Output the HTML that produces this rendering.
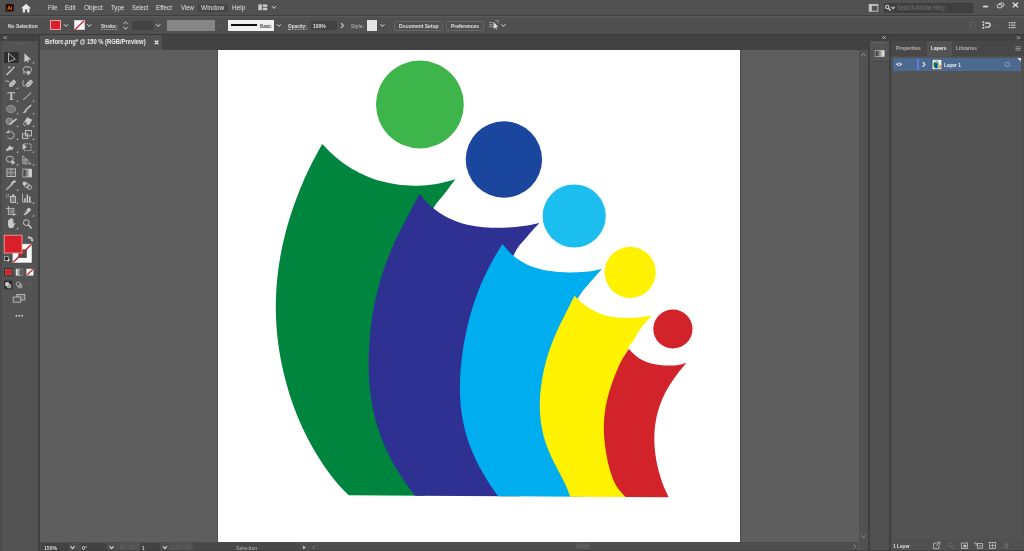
<!DOCTYPE html><html><head><meta charset="utf-8"><title>Adobe Illustrator</title><style>
html,body{margin:0;padding:0;}
body{width:1024px;height:551px;overflow:hidden;background:#5e5e5e;font-family:"Liberation Sans",sans-serif;position:relative;}
div{position:absolute;box-sizing:border-box;}
.tx{position:absolute;white-space:nowrap;line-height:1;transform-origin:0 50%;display:inline-block;}
svg{position:absolute;left:0;top:0;overflow:visible;}
#ui{left:0;top:0;width:1024px;height:551px;will-change:transform;transform:translateZ(0);}
</style></head><body>
<div id="canvas" style="left:40px;top:50px;width:818.5px;height:491.5px;background:#5e5e5e"></div>
<div id="artboard" style="left:218px;top:50px;width:521.5px;height:491.5px;background:#fff;box-shadow:0 0 0 0.6px rgba(40,40,40,.55)"></div>
<svg id="art" width="1024" height="551" viewBox="0 0 1024 551"><g id="artg"><path fill="#00853f" d="M322.25 144.00 C323.64 145.42 327.81 149.89 330.58 152.52 C333.36 155.14 336.14 157.52 338.92 159.74 C341.70 161.95 344.48 163.96 347.25 165.81 C350.03 167.67 352.81 169.34 355.59 170.87 C358.37 172.41 361.14 173.78 363.92 175.04 C366.70 176.29 369.48 177.40 372.26 178.40 C375.03 179.41 377.81 180.28 380.59 181.06 C383.37 181.83 386.15 182.49 388.93 183.06 C391.70 183.63 394.48 184.10 397.26 184.48 C400.04 184.86 402.82 185.15 405.59 185.34 C408.37 185.54 411.15 185.65 413.93 185.68 C416.71 185.70 419.48 185.64 422.26 185.49 C425.04 185.34 427.82 185.10 430.60 184.77 C433.38 184.44 436.15 184.02 438.93 183.49 C441.71 182.97 444.49 182.35 447.27 181.62 C450.04 180.89 454.21 179.52 455.60 179.10 C453.83 181.43 448.64 188.37 445.00 193.10 C441.36 197.83 437.58 201.35 433.75 207.50 C429.92 213.65 425.62 221.25 422.00 230.00 C418.38 238.75 415.33 248.33 412.00 260.00 C408.67 271.67 404.50 285.00 402.00 300.00 C399.50 315.00 397.00 330.00 397.00 350.00 C397.00 370.00 397.33 395.71 402.00 420.00 C406.67 444.29 421.17 483.11 425.00 495.73 L348.75 495.25 C347.12 493.58 341.95 488.56 338.97 485.21 C335.98 481.87 333.40 478.52 330.84 475.18 C328.28 471.83 325.87 468.49 323.58 465.14 C321.29 461.80 319.13 458.45 317.07 455.11 C315.02 451.76 313.08 448.42 311.23 445.07 C309.38 441.73 307.63 438.38 305.97 435.04 C304.30 431.69 302.73 428.35 301.23 425.00 C299.74 421.65 298.32 418.31 296.98 414.96 C295.63 411.62 294.36 408.27 293.16 404.93 C291.96 401.58 290.83 398.24 289.76 394.89 C288.69 391.55 287.68 388.20 286.74 384.86 C285.80 381.51 284.92 378.17 284.11 374.82 C283.29 371.48 282.54 368.13 281.84 364.79 C281.15 361.44 280.51 358.10 279.94 354.75 C279.36 351.40 278.85 348.06 278.39 344.71 C277.94 341.37 277.55 338.02 277.21 334.68 C276.88 331.33 276.60 327.99 276.39 324.64 C276.18 321.30 276.02 317.95 275.93 314.61 C275.84 311.26 275.80 307.92 275.83 304.57 C275.85 301.23 275.94 297.88 276.09 294.54 C276.24 291.19 276.44 287.85 276.71 284.50 C276.98 281.15 277.30 277.81 277.69 274.46 C278.07 271.12 278.52 267.77 279.02 264.43 C279.53 261.08 280.09 257.74 280.71 254.39 C281.33 251.05 282.01 247.70 282.75 244.36 C283.48 241.01 284.28 237.67 285.13 234.32 C285.98 230.98 286.88 227.63 287.85 224.29 C288.81 220.94 289.83 217.60 290.91 214.25 C291.99 210.90 293.12 207.56 294.32 204.21 C295.51 200.87 296.76 197.52 298.06 194.18 C299.37 190.83 300.73 187.49 302.16 184.14 C303.59 180.80 305.07 177.45 306.62 174.11 C308.17 170.76 309.79 167.42 311.47 164.07 C313.15 160.73 314.93 157.38 316.73 154.04 C318.52 150.69 321.33 145.67 322.25 144.00 Z"/>
<path fill="#2e3192" d="M419.40 193.75 C420.73 195.27 424.73 200.21 427.40 202.89 C430.07 205.57 432.73 207.77 435.40 209.82 C438.07 211.88 440.73 213.64 443.40 215.23 C446.07 216.82 448.73 218.15 451.40 219.35 C454.07 220.55 456.73 221.55 459.40 222.43 C462.07 223.31 464.73 224.03 467.40 224.65 C470.07 225.28 472.73 225.76 475.40 226.18 C478.07 226.60 480.73 226.90 483.40 227.15 C486.07 227.40 488.73 227.56 491.40 227.66 C494.07 227.77 496.73 227.81 499.40 227.79 C502.07 227.78 504.73 227.70 507.40 227.57 C510.07 227.45 512.73 227.26 515.40 227.02 C518.07 226.77 520.73 226.48 523.40 226.10 C526.07 225.73 528.73 225.28 531.40 224.78 C534.07 224.28 538.07 223.38 539.40 223.10 C537.42 225.29 531.57 231.35 527.50 236.25 C523.43 241.15 519.25 244.38 515.00 252.50 C510.75 260.62 505.83 273.75 502.00 285.00 C498.17 296.25 494.50 307.50 492.00 320.00 C489.50 332.50 487.50 343.33 487.00 360.00 C486.50 376.67 486.50 401.67 489.00 420.00 C491.50 438.33 496.83 457.28 502.00 470.00 C507.17 482.72 517.00 491.93 520.00 496.32 L414.75 495.66 C413.50 493.99 409.64 488.95 407.28 485.60 C404.91 482.24 402.70 478.89 400.56 475.54 C398.43 472.18 396.39 468.83 394.47 465.47 C392.55 462.12 390.74 458.76 389.06 455.41 C387.37 452.05 385.80 448.70 384.35 445.34 C382.90 441.99 381.57 438.63 380.34 435.28 C379.12 431.93 378.02 428.57 377.01 425.22 C376.01 421.86 375.12 418.51 374.32 415.15 C373.52 411.80 372.83 408.44 372.22 405.09 C371.60 401.73 371.09 398.38 370.65 395.02 C370.21 391.67 369.86 388.32 369.57 384.96 C369.28 381.61 369.07 378.25 368.92 374.90 C368.78 371.54 368.70 368.19 368.68 364.83 C368.66 361.48 368.70 358.12 368.80 354.77 C368.89 351.42 369.05 348.06 369.26 344.71 C369.47 341.35 369.73 338.00 370.05 334.64 C370.37 331.29 370.74 327.93 371.17 324.58 C371.60 321.22 372.08 317.87 372.62 314.51 C373.17 311.16 373.77 307.81 374.43 304.45 C375.10 301.10 375.82 297.74 376.61 294.39 C377.41 291.03 378.26 287.68 379.19 284.32 C380.12 280.97 381.12 277.61 382.19 274.26 C383.26 270.91 384.41 267.55 385.62 264.20 C386.84 260.84 388.14 257.49 389.50 254.13 C390.87 250.78 392.31 247.42 393.81 244.07 C395.32 240.71 396.90 237.36 398.53 234.00 C400.15 230.65 401.85 227.30 403.57 223.94 C405.30 220.59 407.08 217.23 408.86 213.88 C410.63 210.52 412.47 207.17 414.22 203.81 C415.98 200.46 418.54 195.43 419.40 193.75 Z"/>
<path fill="#00adee" d="M502.50 244.00 C503.88 245.57 508.02 250.75 510.78 253.41 C513.54 256.08 516.31 258.14 519.07 260.01 C521.83 261.89 524.59 263.36 527.35 264.66 C530.11 265.96 532.87 266.96 535.63 267.84 C538.39 268.71 541.16 269.36 543.92 269.94 C546.68 270.51 549.44 270.92 552.20 271.27 C554.96 271.62 557.72 271.86 560.48 272.05 C563.24 272.23 566.01 272.34 568.77 272.39 C571.53 272.45 574.29 272.44 577.05 272.35 C579.81 272.26 582.57 272.11 585.33 271.85 C588.09 271.58 590.86 271.23 593.62 270.75 C596.38 270.28 600.52 269.29 601.90 269.00 C599.92 271.25 593.65 278.17 590.00 282.50 C586.35 286.83 584.00 288.75 580.00 295.00 C576.00 301.25 570.00 309.17 566.00 320.00 C562.00 330.83 558.00 343.33 556.00 360.00 C554.00 376.67 552.33 401.67 554.00 420.00 C555.67 438.33 560.83 457.21 566.00 470.00 C571.17 482.79 581.83 492.27 585.00 496.73 L498.10 496.18 C496.89 494.50 493.10 489.46 490.86 486.10 C488.61 482.73 486.59 479.37 484.61 476.01 C482.63 472.65 480.73 469.28 478.97 465.92 C477.22 462.56 475.57 459.20 474.06 455.83 C472.54 452.47 471.16 449.11 469.90 445.75 C468.65 442.38 467.53 439.02 466.52 435.66 C465.52 432.30 464.65 428.93 463.90 425.57 C463.14 422.21 462.51 418.85 461.98 415.48 C461.45 412.12 461.04 408.76 460.72 405.40 C460.40 402.03 460.18 398.67 460.05 395.31 C459.91 391.95 459.88 388.59 459.91 385.22 C459.95 381.86 460.07 378.50 460.25 375.14 C460.44 371.77 460.70 368.41 461.02 365.05 C461.34 361.69 461.73 358.32 462.18 354.96 C462.62 351.60 463.13 348.24 463.70 344.87 C464.27 341.51 464.90 338.15 465.58 334.79 C466.27 331.42 467.02 328.06 467.83 324.70 C468.64 321.34 469.52 317.97 470.46 314.61 C471.41 311.25 472.42 307.89 473.51 304.52 C474.60 301.16 475.76 297.80 477.01 294.44 C478.26 291.07 479.58 287.71 481.00 284.35 C482.42 280.99 483.93 277.62 485.54 274.26 C487.14 270.90 488.84 267.54 490.64 264.17 C492.44 260.81 494.37 257.45 496.34 254.09 C498.32 250.72 501.47 245.68 502.50 244.00 Z"/>
<path fill="#fff200" d="M574.50 295.80 C575.93 297.12 580.23 301.42 583.10 303.72 C585.97 306.02 588.83 307.94 591.70 309.60 C594.57 311.26 597.43 312.57 600.30 313.68 C603.17 314.80 606.03 315.61 608.90 316.26 C611.77 316.92 614.63 317.33 617.50 317.62 C620.37 317.90 623.23 317.99 626.10 318.00 C628.97 318.00 631.83 317.85 634.70 317.64 C637.57 317.44 640.43 317.13 643.30 316.79 C646.17 316.45 650.47 315.80 651.90 315.60 C650.02 317.79 643.73 324.48 640.60 328.75 C637.47 333.02 635.18 337.92 633.10 341.25 C631.02 344.58 630.78 343.12 628.10 348.75 C625.42 354.38 619.68 363.12 617.00 375.00 C614.32 386.88 612.00 405.83 612.00 420.00 C612.00 434.17 613.17 447.16 617.00 460.00 C620.83 472.84 632.00 490.87 635.00 497.04 L570.25 496.63 C569.59 494.96 567.78 489.94 566.30 486.59 C564.82 483.25 563.06 479.90 561.36 476.55 C559.66 473.20 557.79 469.86 556.09 466.51 C554.39 463.16 552.68 459.81 551.16 456.47 C549.65 453.12 548.22 449.77 546.99 446.43 C545.76 443.08 544.67 439.73 543.76 436.38 C542.84 433.04 542.10 429.69 541.51 426.34 C540.92 423.00 540.51 419.65 540.22 416.30 C539.93 412.95 539.80 409.61 539.78 406.26 C539.76 402.91 539.88 399.56 540.10 396.22 C540.31 392.87 540.65 389.52 541.08 386.18 C541.51 382.83 542.04 379.48 542.66 376.13 C543.29 372.79 544.01 369.44 544.83 366.09 C545.64 362.74 546.56 359.40 547.57 356.05 C548.58 352.70 549.69 349.36 550.90 346.01 C552.12 342.66 553.43 339.31 554.84 335.97 C556.25 332.62 557.78 329.27 559.36 325.93 C560.94 322.58 562.64 319.23 564.33 315.88 C566.03 312.54 567.83 309.19 569.52 305.84 C571.22 302.49 573.67 297.47 574.50 295.80 Z"/>
<path fill="#d2232a" d="M628.75 349.00 C630.12 350.29 634.25 354.66 637.00 356.72 C639.75 358.79 642.50 360.19 645.25 361.41 C648.00 362.63 650.75 363.40 653.50 364.05 C656.25 364.70 659.00 365.06 661.75 365.32 C664.50 365.58 667.25 365.66 670.00 365.60 C672.75 365.53 675.50 365.35 678.25 364.93 C681.00 364.52 685.12 363.41 686.50 363.10 C685.04 364.82 680.39 369.98 677.71 373.42 C675.04 376.86 672.62 380.30 670.43 383.74 C668.24 387.18 666.30 390.62 664.59 394.06 C662.87 397.50 661.41 400.94 660.16 404.38 C658.90 407.82 657.89 411.26 657.05 414.70 C656.22 418.14 655.62 421.58 655.17 425.02 C654.72 428.46 654.48 431.89 654.37 435.33 C654.27 438.77 654.35 442.21 654.56 445.65 C654.76 449.09 655.13 452.53 655.62 455.97 C656.11 459.41 656.74 462.85 657.52 466.29 C658.29 469.73 659.19 473.17 660.26 476.61 C661.34 480.05 662.53 483.49 663.95 486.93 C665.36 490.37 667.95 495.53 668.75 497.25 L625.60 496.98 C624.12 495.22 619.00 489.93 616.69 486.41 C614.38 482.89 613.09 479.36 611.74 475.84 C610.39 472.32 609.50 468.79 608.61 465.27 C607.72 461.75 607.04 458.22 606.41 454.70 C605.79 451.18 605.26 447.65 604.86 444.13 C604.45 440.61 604.14 437.08 603.98 433.56 C603.83 430.04 603.79 426.51 603.93 422.99 C604.07 419.47 604.36 415.94 604.82 412.42 C605.28 408.90 605.91 405.37 606.67 401.85 C607.44 398.33 608.37 394.80 609.40 391.28 C610.43 387.76 611.60 384.23 612.87 380.71 C614.13 377.19 615.48 373.66 617.01 370.14 C618.55 366.62 620.12 363.09 622.08 359.57 C624.04 356.05 627.64 350.76 628.75 349.00 Z"/>
<circle cx="419.9" cy="104.5" r="43.9" fill="#3eb54a"/>
<circle cx="503.9" cy="159.5" r="38.2" fill="#1a479d"/>
<circle cx="574.2" cy="216" r="31.6" fill="#1cbef0"/>
<circle cx="630.2" cy="272.3" r="25.6" fill="#fff200"/>
<circle cx="672.9" cy="329" r="19.6" fill="#d2232a"/></g></svg>
<div id="menubar" style="left:0;top:0;width:1024px;height:16px;background:#515151;border-bottom:1px solid #404040"></div>
<div style="left:198px;top:3.5px;width:29.5px;height:8.5px;background:#454545;border-radius:1px"></div>
<div id="ctrl" style="left:0;top:16px;width:1024px;height:17.8px;background:#505050;border-top:1px solid #5a5a5a"></div>
<div id="tabstrip" style="left:0;top:33.8px;width:1024px;height:16.2px;background:#424242;border-top:1px solid #383838"></div>
<div id="tab" style="left:40px;top:35px;width:122px;height:15px;background:#525252"></div>
<div id="toolhead" style="left:0;top:34.5px;width:38.3px;height:6px;background:#414141"></div>
<div id="toolbar" style="left:0;top:40.5px;width:38.3px;height:510.5px;background:#535353;border-left:2.5px solid #4b4b4b"></div>
<div style="left:38.3px;top:34.5px;width:1.7px;height:516.5px;background:#3f3f3f"></div>
<div id="status" style="left:40px;top:541.8px;width:818px;height:9.2px;background:#4e4e4e"></div>
<div style="left:41.9px;top:543px;width:27.2px;height:8px;background:#424242"></div>
<div style="left:81px;top:543px;width:25.5px;height:8px;background:#424242"></div>
<div style="left:140px;top:543px;width:20px;height:8px;background:#424242"></div>
<div style="left:193px;top:543px;width:107px;height:8px;background:#484848"></div>
<div style="left:120.4px;top:543px;width:18.6px;height:8px;background:#545454"></div>
<div style="left:170px;top:543px;width:22px;height:8px;background:#545454"></div>
<div style="left:576px;top:543.3px;width:14px;height:6px;background:#5a5a5a;border-radius:3px"></div>
<div id="vscroll" style="left:858.5px;top:50px;width:9.5px;height:501px;background:#515151"></div>
<div style="left:868px;top:34.5px;width:1.5px;height:516.5px;background:#3f3f3f"></div>
<div id="dockhead" style="left:869.5px;top:34.5px;width:19.5px;height:6.5px;background:#414141"></div>
<div id="dock" style="left:869.5px;top:41px;width:19.5px;height:510px;background:#515151"></div>
<div id="dockicon" style="left:869.5px;top:41px;width:19.5px;height:21.3px;background:#545454;border-bottom:1px solid #484848"></div>
<div style="left:889px;top:34.5px;width:2px;height:516.5px;background:#3f3f3f"></div>
<div id="panelhead" style="left:891px;top:34.5px;width:133px;height:6.5px;background:#414141"></div>
<div id="paneltabs" style="left:891px;top:41px;width:133px;height:14.5px;background:#474747"></div>
<div id="paneltab" style="left:926.8px;top:41px;width:24.8px;height:14.5px;background:#535353"></div>
<div id="panel" style="left:891px;top:55.5px;width:133px;height:495.5px;background:#505050"></div>
<div id="panelin" style="left:893.3px;top:57px;width:127.5px;height:481.5px;background:#535353"></div>
<div id="layerrow" style="left:893.3px;top:58px;width:127.5px;height:12.7px;background:#4c6990"></div>
<div style="left:916.6px;top:58.6px;width:2.2px;height:11.5px;background:#5a7ce0"></div>
<div style="left:40px;top:549.8px;width:984px;height:1.2px;background:#3a3a3a;opacity:.5"></div>
<div style="left:50.3px;top:20.2px;width:10.8px;height:10.3px;background:#dc1f2a;border:0.8px solid #e9a0a0"></div>
<div style="left:74px;top:20.2px;width:10.6px;height:10.3px;background:#fff;border:0.8px solid #cfcfcf"></div>
<div style="left:131.5px;top:21px;width:21.5px;height:8.7px;background:#424242"></div>
<div style="left:167px;top:20.2px;width:48px;height:10.4px;background:#868686"></div>
<div style="left:228.1px;top:20.2px;width:46.3px;height:10.4px;background:#f2f2f2"></div>
<div style="left:231px;top:24.3px;width:26px;height:2px;background:#111"></div>
<div style="left:311px;top:21px;width:26px;height:8.7px;background:#424242"></div>
<div style="left:367px;top:20.2px;width:10px;height:10.4px;background:#e4e4e4"></div>
<div style="left:393.7px;top:20.8px;width:49.3px;height:10.4px;border:1px solid #686868;border-radius:1.5px"></div>
<div style="left:446.4px;top:20.8px;width:37.6px;height:10.4px;border:1px solid #686868;border-radius:1.5px"></div>
<div style="left:884px;top:3.2px;width:88.7px;height:9.4px;background:#3f3f3f;border-radius:1px"></div>
<div id="ui">
<svg id="icons" width="1024" height="551" viewBox="0 0 1024 551"><defs><linearGradient id="tg" x1="0" x2="1" y1="0" y2="0"><stop offset="0" stop-color="#222"/><stop offset="1" stop-color="#f4f4f4"/></linearGradient><linearGradient id="tg2" x1="0" x2="1" y1="0" y2="0"><stop offset="0" stop-color="#f4f4f4"/><stop offset="1" stop-color="#222"/></linearGradient><linearGradient id="tg3" x1="0" x2="1" y1="0" y2="0"><stop offset="0" stop-color="#fff"/><stop offset="1" stop-color="#333"/></linearGradient></defs>
<rect x="5.60" y="4.00" width="8.20" height="7.60" fill="#2b0800" rx="1.40" />
<text x="9.7" y="9.6" font-family="Liberation Sans, sans-serif" font-size="4.8" font-weight="bold" fill="#f7941d" text-anchor="middle">Ai</text>
<path d="M26.1 3.7 L21.2 8.3 L22.7 8.3 L22.7 12.4 L25 12.4 L25 9.6 L27.2 9.6 L27.2 12.4 L29.5 12.4 L29.5 8.3 L31 8.3 Z" fill="#e8e8e8" />
<line x1="39.20" y1="4.00" x2="39.20" y2="12.00" stroke="#5e5e5e" stroke-width="0.80" stroke-linecap="butt"/>
<rect x="258.30" y="4.40" width="3.60" height="5.80" fill="#c8c8c8" />
<rect x="262.80" y="4.40" width="4.50" height="2.50" fill="#c8c8c8" />
<rect x="262.80" y="7.70" width="4.50" height="2.50" fill="#c8c8c8" />
<path d="M272.20 6.40 L274.00 8.40 L275.80 6.40" fill="none" stroke="#d8d8d8" stroke-width="1.00" stroke-linecap="round" stroke-linejoin="round"/>
<rect x="869.20" y="4.40" width="8.60" height="6.80" fill="none" stroke="#c8c8c8" stroke-width="0.90" />
<rect x="869.20" y="4.40" width="2.60" height="6.80" fill="#c8c8c8" />
<line x1="869.20" y1="5.40" x2="877.80" y2="5.40" stroke="#c8c8c8" stroke-width="1.00" stroke-linecap="butt"/>
<circle cx="887.30" cy="7.00" r="1.70" fill="none" stroke="#cfcfcf" stroke-width="1.10"/>
<line x1="888.70" y1="8.50" x2="890.20" y2="10.20" stroke="#cfcfcf" stroke-width="1.30" stroke-linecap="round"/>
<path d="M891.80 7.20 L893.10 8.60 L894.40 7.20" fill="none" stroke="#cfcfcf" stroke-width="1.10" stroke-linecap="round" stroke-linejoin="round"/>
<rect x="983.00" y="5.60" width="5.10" height="1.80" fill="#d6d6d6" />
<rect x="999.20" y="3.10" width="4.60" height="3.20" fill="none" stroke="#d8d8d8" stroke-width="1.00" rx="1.00" />
<rect x="997.30" y="4.60" width="4.60" height="3.20" fill="#515151" stroke="#d8d8d8" stroke-width="1.00" rx="1.00" />
<path d="M1013.1 2.9 L1017.7 6.9 M1017.7 2.9 L1013.1 6.9" fill="none" stroke="#e0e0e0" stroke-width="1.35" stroke-linecap="round" stroke-linejoin="round" />
<path d="M64.20 24.50 L66.00 26.50 L67.80 24.50" fill="none" stroke="#d8d8d8" stroke-width="1.00" stroke-linecap="round" stroke-linejoin="round"/>
<path d="M87.40 24.50 L89.20 26.50 L91.00 24.50" fill="none" stroke="#d8d8d8" stroke-width="1.00" stroke-linecap="round" stroke-linejoin="round"/>
<path d="M156.40 24.50 L158.20 26.50 L160.00 24.50" fill="none" stroke="#d8d8d8" stroke-width="1.00" stroke-linecap="round" stroke-linejoin="round"/>
<path d="M277.10 24.50 L278.90 26.50 L280.70 24.50" fill="none" stroke="#d8d8d8" stroke-width="1.00" stroke-linecap="round" stroke-linejoin="round"/>
<path d="M380.60 24.50 L382.40 26.50 L384.20 24.50" fill="none" stroke="#d8d8d8" stroke-width="1.00" stroke-linecap="round" stroke-linejoin="round"/>
<path d="M501.70 24.50 L503.50 26.50 L505.30 24.50" fill="none" stroke="#d8d8d8" stroke-width="1.00" stroke-linecap="round" stroke-linejoin="round"/>
<path d="M218.90 24.50 L220.70 26.50 L222.50 24.50" fill="none" stroke="#5e5e5e" stroke-width="1.00" stroke-linecap="round" stroke-linejoin="round"/>
<line x1="74.60" y1="30.00" x2="84.10" y2="20.80" stroke="#dc1f2a" stroke-width="1.40" stroke-linecap="butt"/>
<path d="M123.60 23.80 L125.50 21.60 L127.40 23.80" fill="none" stroke="#c8c8c8" stroke-width="0.90" stroke-linecap="round" stroke-linejoin="round" />
<path d="M123.60 27.20 L125.50 29.40 L127.40 27.20" fill="none" stroke="#d8d8d8" stroke-width="0.90" stroke-linecap="round" stroke-linejoin="round"/>
<path d="M341.40 23.50 L343.40 25.50 L341.40 27.50" fill="none" stroke="#c8c8c8" stroke-width="1.10" stroke-linecap="round" stroke-linejoin="round" />
<path d="M489.6 22.6 l3.4 0 M489.6 24.6 l2.6 0 M489.6 26.6 l3.4 0" fill="none" stroke="#bdbdbd" stroke-width="0.70" stroke-linecap="round" stroke-linejoin="round" />
<path d="M493.6 22 l0 7 l1.6 -1.6 l1 2 l0.9 -0.5 l-1 -1.9 l2.1 -0.2 Z" fill="#dcdcdc" />
<path d="M495.6 20.6 l2.6 0 l0 2.6" fill="none" stroke="#bdbdbd" stroke-width="0.60" stroke-linecap="round" stroke-linejoin="round" />
<rect x="970.20" y="22.40" width="5.20" height="5.20" fill="none" stroke="#686868" stroke-width="1.00" stroke-dasharray="1.7 1.8"/>
<rect x="982.60" y="21.40" width="1.60" height="1.80" fill="#dedede" />
<rect x="982.60" y="24.20" width="1.60" height="1.80" fill="#dedede" />
<rect x="982.60" y="27.00" width="1.60" height="1.80" fill="#dedede" />
<path d="M985.6 23 l2.4 0 a2.1 2.1 0 0 1 0 4.2 l-2.4 0" fill="none" stroke="#dedede" stroke-width="1.30" stroke-linecap="round" stroke-linejoin="round" />
<path d="M994.90 24.50 L996.50 26.50 L998.10 24.50" fill="none" stroke="#5e5e5e" stroke-width="1.00" stroke-linecap="round" stroke-linejoin="round"/>
<path d="M1011.2 22.8 l4 0 M1011.2 25.2 l4 0 M1011.2 27.6 l4 0" fill="none" stroke="#d4d4d4" stroke-width="1.00" stroke-linecap="round" stroke-linejoin="round" />
<rect x="1008.80" y="22.20" width="1.30" height="1.30" fill="#d4d4d4" />
<rect x="1008.80" y="24.60" width="1.30" height="1.30" fill="#d4d4d4" />
<rect x="1008.80" y="27.00" width="1.30" height="1.30" fill="#d4d4d4" />
<path d="M155.3 41 L157.9 43.7 M157.9 41 L155.3 43.7" fill="none" stroke="#ececec" stroke-width="1.35" stroke-linecap="round" stroke-linejoin="round" />
<path d="M4.85 36.55 L3.75 37.70 L4.85 38.85" fill="none" stroke="#c4c4c4" stroke-width="0.80" stroke-linecap="round" stroke-linejoin="round" /><path d="M6.65 36.55 L5.55 37.70 L6.65 38.85" fill="none" stroke="#c4c4c4" stroke-width="0.80" stroke-linecap="round" stroke-linejoin="round" />
<path d="M883.65 36.45 L882.55 37.60 L883.65 38.75" fill="none" stroke="#c4c4c4" stroke-width="0.80" stroke-linecap="round" stroke-linejoin="round" /><path d="M885.45 36.45 L884.35 37.60 L885.45 38.75" fill="none" stroke="#c4c4c4" stroke-width="0.80" stroke-linecap="round" stroke-linejoin="round" />
<path d="M1017.15 36.55 L1018.25 37.70 L1017.15 38.85" fill="none" stroke="#c4c4c4" stroke-width="0.80" stroke-linecap="round" stroke-linejoin="round" /><path d="M1018.95 36.55 L1020.05 37.70 L1018.95 38.85" fill="none" stroke="#c4c4c4" stroke-width="0.80" stroke-linecap="round" stroke-linejoin="round" />
<line x1="14.00" y1="44.00" x2="23.50" y2="44.00" stroke="#686868" stroke-width="0.90" stroke-linecap="butt"/>
<line x1="874.00" y1="42.80" x2="885.00" y2="42.80" stroke="#686868" stroke-width="0.90" stroke-linecap="butt"/>
<rect x="4.00" y="52.00" width="14.80" height="11.10" fill="#2d2d2d" rx="0.80" />
<path d="M8.5 53.5 L8.5 61.9 L14.9 59.3 Z" fill="#2d2d2d" stroke="#c0c0c0" stroke-width="0.90" stroke-linecap="round" stroke-linejoin="round" />
<path d="M24.4 53.2 L24.4 62.2 L26.6 60.4 L27.6 62.6 L28.8 62 L27.8 59.9 L31 59.4 Z" fill="#c8c8c8" />
<path d="M34.20 63.40 L34.20 61.60 L32.40 63.40 Z" fill="#c8c8c8" />
<line x1="7.00" y1="74.55" x2="12.20" y2="69.15" stroke="#c8c8c8" stroke-width="1.40" stroke-linecap="round"/>
<path d="M13.4 68.95 l0 -2.4 M12.2 67.75 l2.4 0 M9.2 68.15 l0 -1.6 M8.4 67.35 l1.6 0" fill="none" stroke="#c8c8c8" stroke-width="0.70" stroke-linecap="round" stroke-linejoin="round" />
<ellipse cx="27.30" cy="69.55" rx="4.20" ry="2.80" fill="none" stroke="#c8c8c8" stroke-width="1.00" />
<path d="M27.2 69.95 L27.2 75.15 L31 73.35 Z" fill="#c8c8c8" />
<path d="M24 71.55 q-1.4 1.6 0.4 2.6" fill="none" stroke="#c8c8c8" stroke-width="0.80" stroke-linecap="round" stroke-linejoin="round" />
<path d="M8.90 87.30 L9.20 83.90 L12.20 80.70 L13.80 79.60 L16.20 82.00 L15.10 83.70 L12.10 86.80 Z" fill="#c8c8c8" /><line x1="9.30" y1="86.80" x2="12.30" y2="83.80" stroke="#535353" stroke-width="0.60" stroke-linecap="round"/><line x1="12.60" y1="81.00" x2="14.90" y2="83.30" stroke="#535353" stroke-width="0.50" stroke-linecap="round"/>
<line x1="5.60" y1="80.80" x2="9.00" y2="81.80" stroke="#c8c8c8" stroke-width="0.90" stroke-linecap="round"/>
<path d="M18.20 89.10 L18.20 87.30 L16.40 89.10 Z" fill="#c8c8c8" />
<path d="M25.80 87.30 L26.10 83.90 L29.10 80.70 L30.70 79.60 L33.10 82.00 L32.00 83.70 L29.00 86.80 Z" fill="#c8c8c8" /><line x1="26.20" y1="86.80" x2="29.20" y2="83.80" stroke="#535353" stroke-width="0.60" stroke-linecap="round"/><line x1="29.50" y1="81.00" x2="31.80" y2="83.30" stroke="#535353" stroke-width="0.50" stroke-linecap="round"/>
<path d="M23.6 80.50 q-1.8 3.0 -0.4 5.2 q1.6 0.8 2.2 -0.6" fill="none" stroke="#c8c8c8" stroke-width="0.80" stroke-linecap="round" stroke-linejoin="round" />
<text x="11.4" y="100.15" font-family="Liberation Serif, serif" font-size="11.5" font-weight="bold" fill="#c8c8c8" text-anchor="middle">T</text>
<path d="M18.20 101.85 L18.20 100.05 L16.40 101.85 Z" fill="#c8c8c8" />
<line x1="23.60" y1="99.45" x2="31.00" y2="92.85" stroke="#c8c8c8" stroke-width="1.00" stroke-linecap="round"/>
<path d="M34.20 101.85 L34.20 100.05 L32.40 101.85 Z" fill="#c8c8c8" />
<ellipse cx="11.10" cy="109.00" rx="4.70" ry="3.70" fill="#7a7a7a" stroke="#9c9c9c" stroke-width="0.80" />
<path d="M18.20 114.20 L18.20 112.40 L16.40 114.20 Z" fill="#c8c8c8" />
<line x1="25.60" y1="110.20" x2="30.80" y2="105.20" stroke="#c8c8c8" stroke-width="1.50" stroke-linecap="round"/>
<path d="M23.6 112.80 q0.6 -2.4 2.6 -2 q0.6 1.8 -2.6 2 Z" fill="#c8c8c8" stroke="#c8c8c8" stroke-width="0.50" stroke-linecap="round" stroke-linejoin="round" />
<path d="M34.20 114.20 L34.20 112.40 L32.40 114.20 Z" fill="#c8c8c8" />
<circle cx="9.40" cy="121.35" r="3.20" fill="#7a7a7a" stroke="#b0b0b0" stroke-width="0.80"/>
<line x1="10.00" y1="124.15" x2="16.20" y2="119.15" stroke="#c8c8c8" stroke-width="1.50" stroke-linecap="round"/>
<path d="M18.20 126.95 L18.20 125.15 L16.40 126.95 Z" fill="#c8c8c8" />
<path d="M27.2 117.15 l5 2.7 l-3.3 5.4 l-5 -2.9 Z" fill="#c8c8c8" />
<ellipse cx="25.20" cy="123.65" rx="1.50" ry="2.10" fill="#535353" stroke="#c8c8c8" stroke-width="0.70" transform="rotate(30 25.2 123.65)"/>
<path d="M34.20 126.95 L34.20 125.15 L32.40 126.95 Z" fill="#c8c8c8" />
<path d="M8.2 132.30 a3.7 3.7 0 1 1 -0.6 5.4" fill="none" stroke="#c8c8c8" stroke-width="0.90" stroke-linecap="round" stroke-linejoin="round" />
<path d="M6.6 132.70 l2.4 0.4 l-0.2 -2.6 Z" fill="#c8c8c8" stroke="#c8c8c8" stroke-width="0.50" stroke-linecap="round" stroke-linejoin="round" />
<ellipse cx="11.00" cy="135.10" rx="3.60" ry="3.60" fill="none" stroke="#777" stroke-width="0.60" stroke-dasharray="1 1"/>
<path d="M18.20 139.90 L18.20 138.10 L16.40 139.90 Z" fill="#c8c8c8" />
<rect x="22.60" y="133.90" width="5.20" height="4.60" fill="none" stroke="#c8c8c8" stroke-width="0.90" />
<rect x="25.40" y="130.50" width="6.00" height="5.40" fill="none" stroke="#c8c8c8" stroke-width="0.90" />
<path d="M34.20 139.90 L34.20 138.10 L32.40 139.90 Z" fill="#c8c8c8" />
<path d="M6.4 148.85 q2.2 -0.4 3 -3.6 q1.6 2.6 4.6 1.4 q-1.8 1.6 -1.6 3.4 q-3 -0.8 -6 1.4 Z" fill="#c8c8c8" />
<path d="M18.20 152.65 L18.20 150.85 L16.40 152.65 Z" fill="#c8c8c8" />
<rect x="24.20" y="143.85" width="6.80" height="6.80" fill="none" stroke="#c8c8c8" stroke-width="0.90" stroke-dasharray="1.4 1"/>
<path d="M22.6 143.65 l0 6.2 l4.4 -2.8 Z" fill="#c8c8c8" />
<path d="M34.20 152.65 L34.20 150.85 L32.40 152.65 Z" fill="#c8c8c8" />
<ellipse cx="9.80" cy="159.20" rx="3.60" ry="2.90" fill="none" stroke="#c8c8c8" stroke-width="0.90" />
<path d="M11.6 159.80 l0 5 l3.8 -2 Z" fill="#c8c8c8" />
<path d="M18.20 165.40 L18.20 163.60 L16.40 165.40 Z" fill="#c8c8c8" />
<path d="M22.8 156.20 l0 7.6 l8 0 Z M25.4 158.60 l0 5.4 M22.8 160.00 l5 0" fill="none" stroke="#c8c8c8" stroke-width="0.70" stroke-linecap="round" stroke-linejoin="round" />
<path d="M23.4 158.40 l0 5.2 l5.6 0 Z" fill="#8a8a8a" />
<path d="M34.20 165.40 L34.20 163.60 L32.40 165.40 Z" fill="#c8c8c8" />
<rect x="7.00" y="168.95" width="8.40" height="7.60" fill="none" stroke="#c8c8c8" stroke-width="0.90" />
<path d="M7 172.95 q4 -1.6 8.4 0 M11.2 168.95 q-1.2 3.6 0 7.6" fill="none" stroke="#c8c8c8" stroke-width="0.70" stroke-linecap="round" stroke-linejoin="round" />
<rect x="8.40" y="170.15" width="5.60" height="5.20" fill="#8a8a8a" opacity="0.6"/>
<rect x="22.9" y="169.15" width="8.6" height="7.8" fill="url(#tg)" stroke="#c8c8c8" stroke-width="0.8"/>
<line x1="7.00" y1="189.10" x2="12.40" y2="183.90" stroke="#c8c8c8" stroke-width="1.50" stroke-linecap="round"/>
<line x1="12.20" y1="182.90" x2="14.80" y2="181.30" stroke="#c8c8c8" stroke-width="2.20" stroke-linecap="round"/>
<line x1="7.40" y1="188.70" x2="11.00" y2="185.10" stroke="#535353" stroke-width="0.50" stroke-linecap="round"/>
<path d="M18.20 190.90 L18.20 189.10 L16.40 190.90 Z" fill="#c8c8c8" />
<rect x="22.80" y="181.70" width="3.60" height="3.60" fill="#c8c8c8" rx="0.50" />
<rect x="25.00" y="183.70" width="4.00" height="3.80" fill="none" stroke="#c8c8c8" stroke-width="0.80" rx="0.80" transform="rotate(20 27 185.50)"/>
<rect x="27.40" y="185.30" width="4.00" height="3.80" fill="none" stroke="#c8c8c8" stroke-width="0.80" rx="0.80" transform="rotate(20 29.4 187.10)"/>
<rect x="10.60" y="196.45" width="5.00" height="6.00" fill="#7a7a7a" stroke="#c8c8c8" stroke-width="0.90" />
<rect x="12.00" y="194.45" width="2.20" height="2.00" fill="#c8c8c8" />
<path d="M6.4 194.65 l2.6 0 l0 2.4 M6.6 195.65 l0 2" fill="none" stroke="#a8a8a8" stroke-width="0.70" stroke-linecap="round" stroke-linejoin="round" />
<path d="M18.20 203.65 L18.20 201.85 L16.40 203.65 Z" fill="#c8c8c8" />
<path d="M22.6 194.05 l0 8 l9.2 0" fill="none" stroke="#c8c8c8" stroke-width="0.80" stroke-linecap="round" stroke-linejoin="round" />
<rect x="24.20" y="198.05" width="1.50" height="3.80" fill="#c8c8c8" />
<rect x="26.60" y="194.65" width="1.50" height="7.20" fill="#c8c8c8" />
<rect x="29.00" y="196.45" width="1.50" height="5.40" fill="#c8c8c8" />
<path d="M34.20 203.65 L34.20 201.85 L32.40 203.65 Z" fill="#c8c8c8" />
<path d="M8.4 206.40 l0 8 l7.6 0 M6.4 208.40 l7.4 0 l0 7.4" fill="none" stroke="#c8c8c8" stroke-width="0.90" stroke-linecap="round" stroke-linejoin="round" />
<rect x="9.60" y="209.80" width="4.00" height="3.40" fill="#8a8a8a" />
<path d="M23.2 215.20 l4.8 -7.4 l2.4 0.4 l0.4 2.2 l-5.2 4.6 Z" fill="#c8c8c8" />
<line x1="23.80" y1="214.40" x2="27.40" y2="210.40" stroke="#535353" stroke-width="0.50" stroke-linecap="round"/>
<path d="M34.20 216.40 L34.20 214.60 L32.40 216.40 Z" fill="#c8c8c8" />
<path d="M8 225.15 l0 -4.6 q0.7 -0.9 1.3 0 l0 -1.6 q0.7 -0.9 1.4 0 l0 -0.6 q0.7 -0.9 1.4 0 l0 1 q0.7 -0.8 1.3 0 l0 4.6 q1 -1.4 1.9 -0.6 l-2.4 4.6 l-3.8 0 Z" fill="#c8c8c8" />
<path d="M18.20 229.15 L18.20 227.35 L16.40 229.15 Z" fill="#c8c8c8" />
<circle cx="26.30" cy="222.65" r="2.90" fill="none" stroke="#c8c8c8" stroke-width="1.00"/>
<line x1="28.50" y1="224.95" x2="31.20" y2="227.95" stroke="#c8c8c8" stroke-width="1.50" stroke-linecap="round"/>
<rect x="12.90" y="244.10" width="18.80" height="18.40" fill="#fff" stroke="#e0e0e0" stroke-width="0.50" />
<rect x="18.30" y="249.40" width="8.50" height="8.50" fill="#4c4c4c" />
<line x1="13.30" y1="262.20" x2="31.50" y2="244.30" stroke="#c8202a" stroke-width="1.50" stroke-linecap="butt"/>
<rect x="4.20" y="235.20" width="17.80" height="17.80" fill="#d91f28" stroke="#ee9c9c" stroke-width="0.90" />
<path d="M27.6 237.6 l2 -2.2 l0 1.4 q3.2 0 3.2 3 l1.2 0 l-1.9 2 l-1.9 -2 l1.2 0 q0 -1.6 -1.8 -1.6 l0 1.4 Z" fill="#c8c8c8" />
<rect x="6.20" y="258.20" width="3.60" height="3.60" fill="#fff" stroke="#222" stroke-width="0.60" />
<rect x="4.60" y="256.80" width="3.60" height="3.60" fill="#222" stroke="#ddd" stroke-width="0.60" />
<rect x="4.00" y="268.00" width="8.40" height="8.20" fill="#2d2d2d" rx="0.60" />
<rect x="5.40" y="269.40" width="5.80" height="5.60" fill="#d8202a" stroke="#e88" stroke-width="0.40" />
<rect x="16" y="269" width="6.6" height="6.4" fill="url(#tg2)" stroke="#ccc" stroke-width="0.5"/>
<rect x="26.60" y="269.00" width="6.60" height="6.40" fill="#fff" stroke="#ccc" stroke-width="0.50" />
<line x1="26.80" y1="275.20" x2="33.00" y2="269.20" stroke="#dc1f2a" stroke-width="1.30" stroke-linecap="butt"/>
<rect x="4.00" y="280.60" width="8.40" height="8.60" fill="#2d2d2d" rx="0.60" />
<circle cx="7.20" cy="284.20" r="2.20" fill="#cfcfcf"/>
<rect x="7.40" y="284.60" width="3.40" height="3.20" fill="#999" stroke="#e0e0e0" stroke-width="0.50" rx="0.50" />
<circle cx="18.40" cy="284.20" r="2.20" fill="none" stroke="#cfcfcf" stroke-width="0.70"/>
<rect x="18.60" y="284.60" width="3.40" height="3.20" fill="#888" stroke="#d0d0d0" stroke-width="0.50" rx="0.50" />
<circle cx="29.40" cy="284.60" r="1.80" fill="#5c5c5c"/>
<rect x="16.80" y="294.40" width="8.00" height="5.60" fill="#6a6a6a" stroke="#c8c8c8" stroke-width="0.80" />
<rect x="13.20" y="297.00" width="7.60" height="5.20" fill="#5a5a5a" stroke="#c8c8c8" stroke-width="0.80" />
<circle cx="16.40" cy="315.70" r="0.95" fill="#c8c8c8"/>
<circle cx="19.20" cy="315.70" r="0.95" fill="#c8c8c8"/>
<circle cx="22.00" cy="315.70" r="0.95" fill="#c8c8c8"/>
<rect x="875.2" y="50.3" width="9" height="6.4" fill="url(#tg)" stroke="#c8c8c8" stroke-width="0.6"/>
<path d="M1015.8 46.8 l4.6 0 M1015.8 48.5 l4.6 0 M1015.8 50.2 l4.6 0" fill="none" stroke="#a0a0a0" stroke-width="0.80" stroke-linecap="round" stroke-linejoin="round" />
<path d="M895.8 64.3 q3.3 -3.6 6.6 0 q-3.3 3.6 -6.6 0 Z" fill="#dcdcdc" />
<circle cx="899.10" cy="64.30" r="1.00" fill="#4c6990"/>
<path d="M923.00 62.40 L925.00 64.40 L923.00 66.40" fill="none" stroke="#ececec" stroke-width="1.20" stroke-linecap="round" stroke-linejoin="round" />
<rect x="932.10" y="59.50" width="9.80" height="10.10" fill="#f4f4f4" stroke="#2a2a2a" stroke-width="0.50" />
<g transform="translate(932.4,60) scale(0.0186) translate(-218,-50)"><use href="#artg"/></g>
<circle cx="1007.20" cy="64.50" r="2.20" fill="none" stroke="#aeb9cc" stroke-width="0.70"/>
<path d="M1017.4 58 L1020.8 58 L1020.8 61.6 Z" fill="#f0f0f0" />
<path d="M936.6 543.2 l-3 0 l0 5.4 l5.4 0 l0 -3" fill="none" stroke="#c2c2c2" stroke-width="0.80" stroke-linecap="round" stroke-linejoin="round" />
<path d="M936.4 545.6 l3.2 -3.2 M937.6 542.2 l2.2 0 l0 2.2" fill="none" stroke="#c2c2c2" stroke-width="0.80" stroke-linecap="round" stroke-linejoin="round" />
<circle cx="950.40" cy="544.80" r="1.90" fill="none" stroke="#6a6a6a" stroke-width="0.80"/>
<line x1="951.80" y1="546.40" x2="953.60" y2="548.40" stroke="#6a6a6a" stroke-width="0.90" stroke-linecap="round"/>
<rect x="961.60" y="543.00" width="5.80" height="5.40" fill="none" stroke="#c2c2c2" stroke-width="0.80" />
<circle cx="964.80" cy="546.00" r="1.60" fill="#c2c2c2"/>
<rect x="977.40" y="543.60" width="5.00" height="4.60" fill="none" stroke="#c2c2c2" stroke-width="0.80" />
<path d="M974.2 543 l2 0 l0 2.4 M979 545.9 l2 0" fill="none" stroke="#c2c2c2" stroke-width="0.80" stroke-linecap="round" stroke-linejoin="round" />
<rect x="989.60" y="542.60" width="6.00" height="6.00" fill="none" stroke="#c2c2c2" stroke-width="0.80" />
<path d="M992.6 544 l0 3.2 M991 545.6 l3.2 0" fill="none" stroke="#c2c2c2" stroke-width="0.80" stroke-linecap="round" stroke-linejoin="round" />
<path d="M1004.4 543.8 l4.2 0 l-0.4 4.8 l-3.4 0 Z" fill="#646464" />
<line x1="1003.80" y1="543.20" x2="1009.20" y2="543.20" stroke="#646464" stroke-width="0.80" stroke-linecap="round"/>
<line x1="1005.60" y1="542.40" x2="1007.40" y2="542.40" stroke="#646464" stroke-width="0.80" stroke-linecap="round"/>
<path d="M861.50 55.60 L863.30 53.60 L865.10 55.60" fill="none" stroke="#9c9c9c" stroke-width="0.90" stroke-linecap="round" stroke-linejoin="round" />
<path d="M861.50 535.50 L863.30 537.50 L865.10 535.50" fill="none" stroke="#9c9c9c" stroke-width="0.90" stroke-linecap="round" stroke-linejoin="round"/>
<path d="M853.90 544.70 L855.70 546.40 L853.90 548.10" fill="none" stroke="#9c9c9c" stroke-width="0.90" stroke-linecap="round" stroke-linejoin="round" />
<path d="M70.90 546.70 L72.60 548.70 L74.30 546.70" fill="none" stroke="#d8d8d8" stroke-width="1.10" stroke-linecap="round" stroke-linejoin="round"/>
<path d="M109.90 546.70 L111.60 548.70 L113.30 546.70" fill="none" stroke="#d8d8d8" stroke-width="1.10" stroke-linecap="round" stroke-linejoin="round"/>
<path d="M163.30 546.70 L165.00 548.70 L166.70 546.70" fill="none" stroke="#d8d8d8" stroke-width="1.10" stroke-linecap="round" stroke-linejoin="round"/>
<path d="M123.00 545.8 l-1.4 1.6 l1.4 1.6 Z" fill="#686868" />
<path d="M133.00 545.8 l-1.4 1.6 l1.4 1.6 Z" fill="#686868" />
<line x1="121.00" y1="545.80" x2="121.00" y2="549.00" stroke="#686868" stroke-width="0.60" stroke-linecap="butt"/>
<path d="M176.60 545.8 l1.4 1.6 l-1.4 1.6 Z" fill="#686868" />
<path d="M185.70 545.8 l1.4 1.6 l-1.4 1.6 Z" fill="#686868" />
<line x1="188.00" y1="545.80" x2="188.00" y2="549.00" stroke="#686868" stroke-width="0.60" stroke-linecap="butt"/>
<path d="M303.2 545.6 l2.4 1.8 l-2.4 1.8 Z" fill="#d8d8d8" />
<path d="M314.30 545.90 L312.90 547.40 L314.30 548.90" fill="none" stroke="#8a8a8a" stroke-width="0.80" stroke-linecap="round" stroke-linejoin="round" /></svg>
<span class="tx" id="t0" style="left:47.50px;top:3.60px;font-size:7.80px;color:#e0e0e0;font-weight:normal;transform:scaleX(0.7473);">File</span>
<span class="tx" id="t1" style="left:65.00px;top:3.60px;font-size:7.80px;color:#e0e0e0;font-weight:normal;transform:scaleX(0.7888);">Edit</span>
<span class="tx" id="t2" style="left:83.75px;top:3.60px;font-size:7.80px;color:#e0e0e0;font-weight:normal;transform:scaleX(0.8316);">Object</span>
<span class="tx" id="t3" style="left:110.60px;top:3.60px;font-size:7.80px;color:#e0e0e0;font-weight:normal;transform:scaleX(0.7778);">Type</span>
<span class="tx" id="t4" style="left:132.20px;top:3.60px;font-size:7.80px;color:#e0e0e0;font-weight:normal;transform:scaleX(0.7475);">Select</span>
<span class="tx" id="t5" style="left:156.40px;top:3.60px;font-size:7.80px;color:#e0e0e0;font-weight:normal;transform:scaleX(0.8032);">Effect</span>
<span class="tx" id="t6" style="left:180.60px;top:3.60px;font-size:7.80px;color:#e0e0e0;font-weight:normal;transform:scaleX(0.7635);">View</span>
<span class="tx" id="t7" style="left:201.25px;top:3.60px;font-size:7.80px;color:#e0e0e0;font-weight:normal;transform:scaleX(0.8347);">Window</span>
<span class="tx" id="t8" style="left:232.20px;top:3.60px;font-size:7.80px;color:#e0e0e0;font-weight:normal;transform:scaleX(0.8288);">Help</span>
<span class="tx" id="t9" style="left:7.80px;top:23.00px;font-size:6.00px;color:#e0e0e0;font-weight:bold;transform:scaleX(0.8172);">No Selection</span>
<span class="tx" id="t10" style="left:100.80px;top:23.00px;font-size:6.00px;color:#e0e0e0;font-weight:bold;transform:scaleX(0.7788);border-bottom:1px dotted #bdbdbd;">Stroke:</span>
<span class="tx" id="t11" style="left:259.80px;top:22.60px;font-size:6.20px;color:#101010;font-weight:normal;transform:scaleX(0.7728);">Basic</span>
<span class="tx" id="t12" style="left:288.00px;top:23.00px;font-size:6.00px;color:#e0e0e0;font-weight:bold;transform:scaleX(0.7828);border-bottom:1px dotted #bdbdbd;">Opacity:</span>
<span class="tx" id="t13" style="left:313.00px;top:23.00px;font-size:6.00px;color:#e0e0e0;font-weight:bold;transform:scaleX(0.8334);">100%</span>
<span class="tx" id="t14" style="left:350.70px;top:23.00px;font-size:6.00px;color:#a8a8a8;font-weight:bold;transform:scaleX(0.8015);">Style:</span>
<span class="tx" id="t15" style="left:398.60px;top:23.00px;font-size:6.00px;color:#e0e0e0;font-weight:bold;transform:scaleX(0.8307);">Document Setup</span>
<span class="tx" id="t16" style="left:451.00px;top:23.00px;font-size:6.00px;color:#e0e0e0;font-weight:bold;transform:scaleX(0.8149);">Preferences</span>
<span class="tx" id="t17" style="left:44.60px;top:39.40px;font-size:6.40px;color:#ececec;font-weight:bold;transform:scaleX(0.9121);">Before.png* @ 150 % (RGB/Preview)</span>
<span class="tx" id="t18" style="left:897.20px;top:4.20px;font-size:7.60px;color:#747474;font-weight:normal;transform:scaleX(0.7305);">Search Adobe Help</span>
<span class="tx" id="t19" style="left:895.50px;top:44.85px;font-size:6.10px;color:#b4b4b4;font-weight:bold;transform:scaleX(0.8191);">Properties</span>
<span class="tx" id="t20" style="left:931.20px;top:44.80px;font-size:6.20px;color:#f4f4f4;font-weight:bold;transform:scaleX(0.7668);">Layers</span>
<span class="tx" id="t21" style="left:956.20px;top:44.85px;font-size:6.10px;color:#b4b4b4;font-weight:bold;transform:scaleX(0.8117);">Libraries</span>
<span class="tx" id="t22" style="left:944.30px;top:61.85px;font-size:6.10px;color:#f0f0f0;font-weight:bold;transform:scaleX(0.7965);">Layer 1</span>
<span class="tx" id="t23" style="left:893.30px;top:542.65px;font-size:6.10px;color:#dcdcdc;font-weight:bold;transform:scaleX(0.7965);">1 Layer</span>
<span class="tx" id="t24" style="left:43.50px;top:544.90px;font-size:6.00px;color:#dcdcdc;font-weight:bold;transform:scaleX(0.8464);">150%</span>
<span class="tx" id="t25" style="left:82.20px;top:544.90px;font-size:6.00px;color:#dcdcdc;font-weight:bold;transform:scaleX(0.8696);">0°</span>
<span class="tx" id="t26" style="left:141.50px;top:544.90px;font-size:6.00px;color:#dcdcdc;font-weight:bold;transform:scaleX(0.7178);">1</span>
<span class="tx" id="t27" style="left:235.60px;top:544.70px;font-size:6.20px;color:#b8b8b8;font-weight:normal;transform:scaleX(0.8324);">Selection</span>
</div>
</body></html>
